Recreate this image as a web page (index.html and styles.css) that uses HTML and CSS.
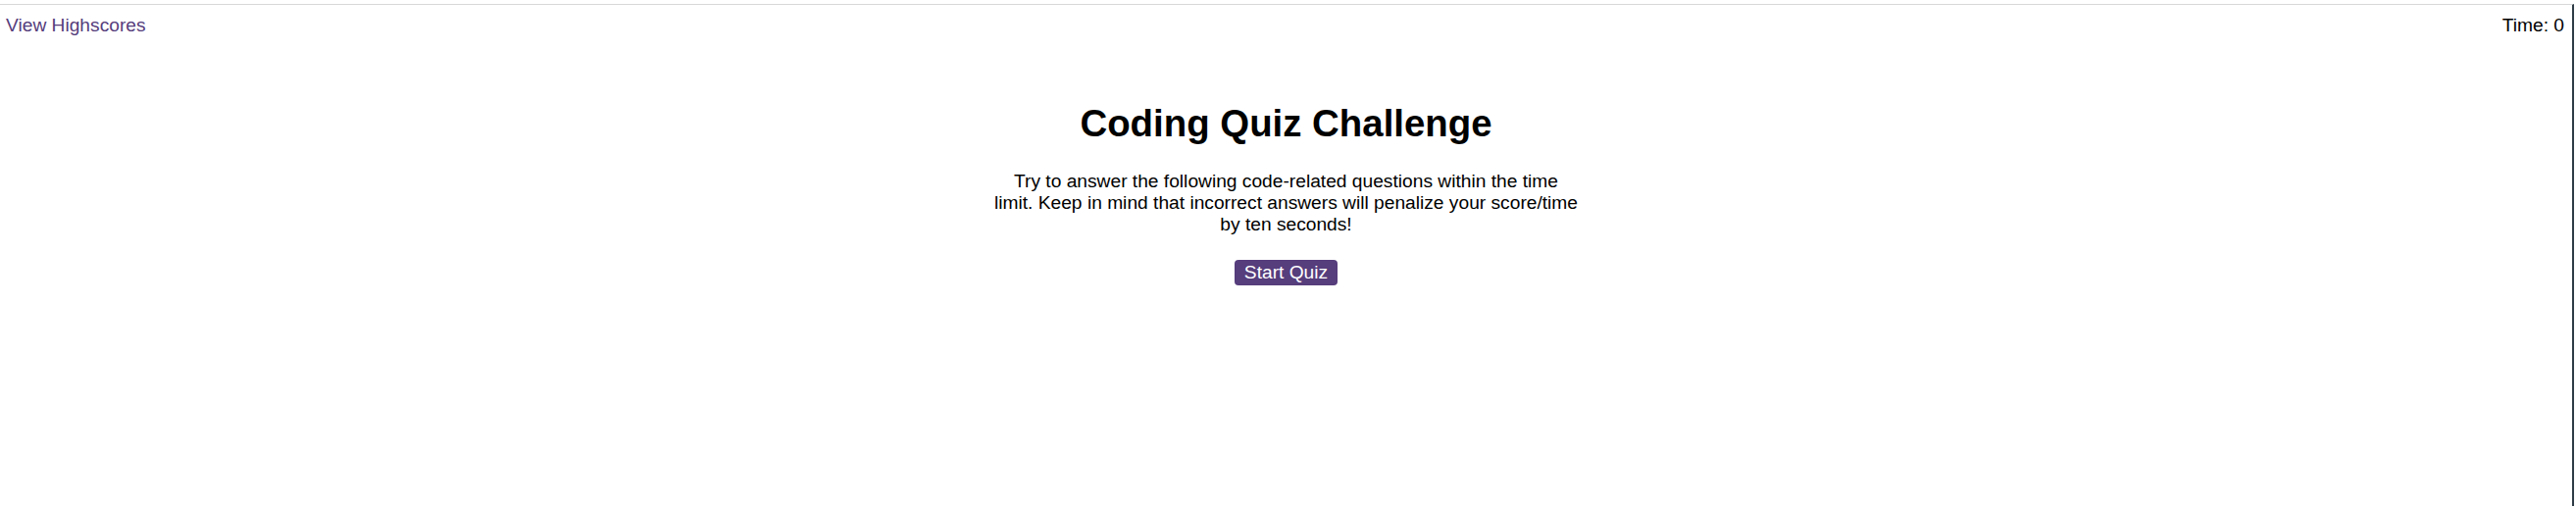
FILE: index.html
```html
<!DOCTYPE html>
<html lang="en">
<head>
<meta charset="utf-8">
<title>Coding Quiz Challenge</title>
<link rel="stylesheet" href="styles.css">
</head>
<body>
<div class="frame">
  <header class="topbar">
    <a class="scores-link" href="#">View Highscores</a>
    <span class="timer">Time: 0</span>
  </header>
  <main class="intro">
    <h1 class="title">Coding Quiz Challenge</h1>
    <p class="lead">Try to answer the following code-related questions within the time limit. Keep in mind that incorrect answers will penalize your score/time by ten seconds!</p>
    <button class="start-btn" type="button">Start Quiz</button>
  </main>
</div>
</body>
</html>
```
FILE: styles.css
```css
html, body {
  margin: 0;
  padding: 0;
  background: #ffffff;
}

body {
  font-family: "Liberation Sans", Arial, sans-serif;
  font-size: 19.2px;
  line-height: 22px;
  color: #000000;
}

.frame {
  margin: 4px 2px 0 0;
  border-top: 1px solid #d8d8d8;
  border-right: 2px solid #2e3c46;
  min-height: calc(100vh - 5px);
  box-sizing: border-box;
}

.topbar {
  display: flex;
  justify-content: space-between;
  align-items: baseline;
  padding: 9.5px 8px 0 6px;
}

.scores-link {
  color: #563d7c;
  text-decoration: none;
}

.timer {
  color: #000000;
}

.intro {
  display: flex;
  flex-direction: column;
  align-items: center;
  text-align: center;
}

.title {
  margin: 67px 0 0;
  font-size: 38.4px;
  line-height: 44px;
  font-weight: bold;
}

.lead {
  margin: 26.5px 0 0;
  width: 596px;
}

.start-btn {
  margin-top: 24.8px;
  font-family: inherit;
  font-size: 19.2px;
  line-height: 22px;
  color: #ffffff;
  background: #563d7c;
  border: none;
  border-radius: 4px;
  padding: 2px 10px;
  cursor: pointer;
}
```
